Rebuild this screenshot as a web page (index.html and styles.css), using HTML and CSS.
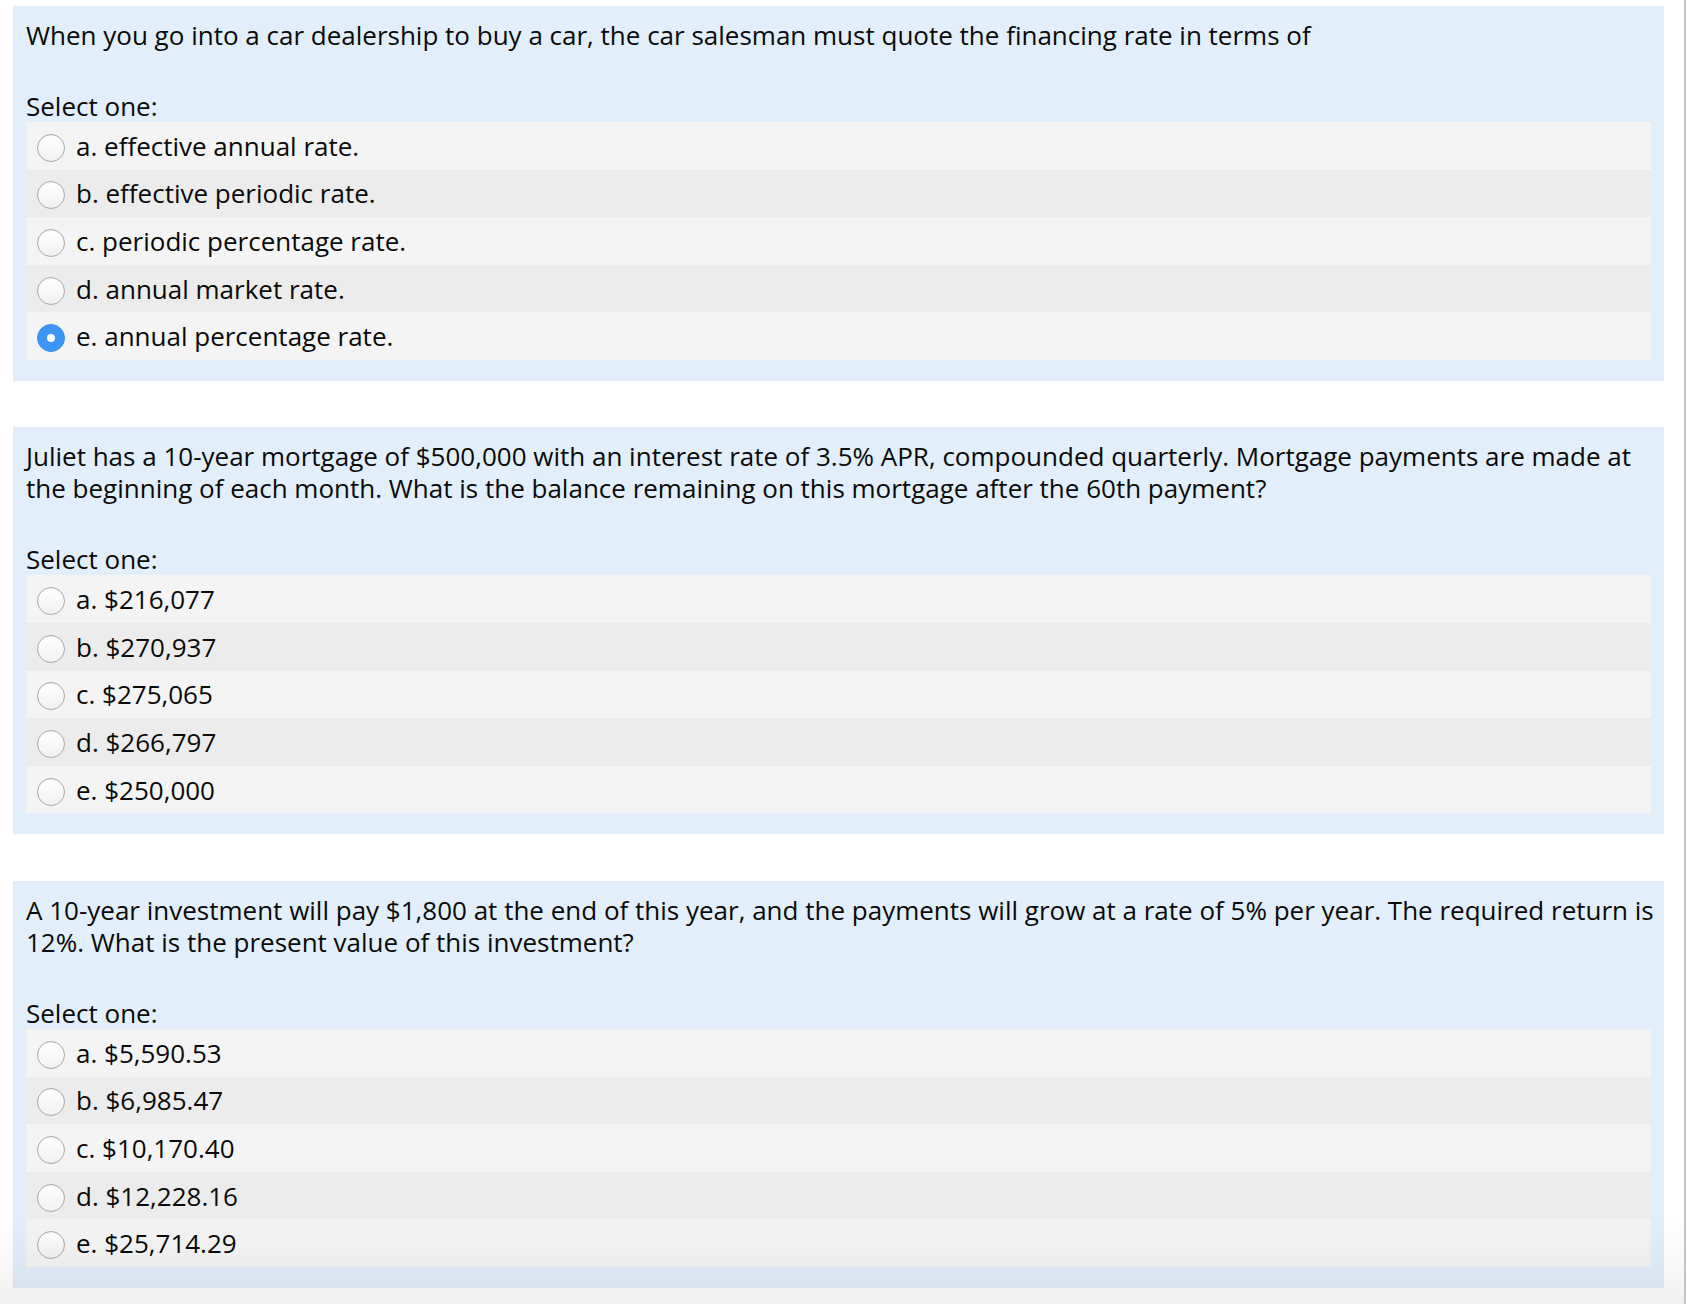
FILE: index.html
```html
<!DOCTYPE html>
<html>
<head>
<meta charset="utf-8">
<link rel="stylesheet" href="styles.css">
</head>
<body>
<div class="page">
  <div class="que">
    <div class="qtext">When you go into a car dealership to buy a car, the car salesman must quote the financing rate in terms of</div>
    <div class="prompt">Select one:</div>
    <div class="answer">
      <div class="opt"><span class="radio"></span><span class="lbl">a. effective annual rate.</span></div>
      <div class="opt"><span class="radio"></span><span class="lbl">b. effective periodic rate.</span></div>
      <div class="opt"><span class="radio"></span><span class="lbl">c. periodic percentage rate.</span></div>
      <div class="opt"><span class="radio"></span><span class="lbl">d. annual market rate.</span></div>
      <div class="opt"><span class="radio checked"></span><span class="lbl">e. annual percentage rate.</span></div>
    </div>
  </div>
  <div class="que">
    <div class="qtext">Juliet has a 10-year mortgage of $500,000 with an interest rate of 3.5% APR, compounded quarterly. Mortgage payments are made at<br>the beginning of each month. What is the balance remaining on this mortgage after the 60th payment?</div>
    <div class="prompt">Select one:</div>
    <div class="answer">
      <div class="opt"><span class="radio"></span><span class="lbl">a. $216,077</span></div>
      <div class="opt"><span class="radio"></span><span class="lbl">b. $270,937</span></div>
      <div class="opt"><span class="radio"></span><span class="lbl">c. $275,065</span></div>
      <div class="opt"><span class="radio"></span><span class="lbl">d. $266,797</span></div>
      <div class="opt"><span class="radio"></span><span class="lbl">e. $250,000</span></div>
    </div>
  </div>
  <div class="que">
    <div class="qtext">A 10-year investment will pay $1,800 at the end of this year, and the payments will grow at a rate of 5% per year. The required return is<br>12%. What is the present value of this investment?</div>
    <div class="prompt">Select one:</div>
    <div class="answer">
      <div class="opt"><span class="radio"></span><span class="lbl">a. $5,590.53</span></div>
      <div class="opt"><span class="radio"></span><span class="lbl">b. $6,985.47</span></div>
      <div class="opt"><span class="radio"></span><span class="lbl">c. $10,170.40</span></div>
      <div class="opt"><span class="radio"></span><span class="lbl">d. $12,228.16</span></div>
      <div class="opt"><span class="radio"></span><span class="lbl">e. $25,714.29</span></div>
    </div>
  </div>
</div>
<div class="edge"></div>
<div class="shade"></div>
</body>
</html>
```

FILE: styles.css
```css
html, body {
  margin: 0;
  padding: 0;
  background: #ffffff;
}
body {
  font-family: "Open Sans", "DejaVu Sans", sans-serif;
  font-size: 26px;
  line-height: 32px;
  color: #0a0a0a;
  overflow: hidden;
  height: 1304px;
}
.page {
  padding: 6px 0 0 13px;
  width: 1651px;
  display: flex;
  flex-direction: column;
  gap: 46.5px;
}
.que {
  background: #e2eef9;
  padding: 13px 13px 21px 13px;
}
.qtext {
  white-space: nowrap;
  margin-bottom: 39px;
}
.answer {
  display: flex;
  flex-direction: column;
}
.opt {
  height: 47.6px;
  display: flex;
  align-items: center;
  padding-left: 11px;
  background: #f4f4f4;
}
.opt:nth-child(even) {
  background: #ececec;
}
.radio {
  width: 26px;
  height: 26px;
  border-radius: 50%;
  border: 1px solid #a9a9a9;
  background: linear-gradient(#ffffff, #f1f1f1);
  box-shadow: inset 0 1px 1px rgba(0,0,0,0.04);
  margin-top: 4px;
  margin-right: 11px;
  flex: none;
  position: relative;
}
.radio.checked {
  border-color: #3a90ee;
  background: #3d95f5;
  box-shadow: none;
}
.radio.checked::after {
  content: "";
  position: absolute;
  left: 9px;
  top: 9px;
  width: 8px;
  height: 8px;
  border-radius: 50%;
  background: #ffffff;
}
.edge {
  position: fixed;
  top: 0;
  left: 1684px;
  width: 2px;
  height: 1304px;
  background: #c4c4c4;
}
.shade {
  position: fixed;
  left: 0;
  bottom: 0;
  width: 1684px;
  height: 90px;
  background: linear-gradient(to bottom, rgba(0,0,0,0) 0%, rgba(0,0,0,0.025) 50%, rgba(0,0,0,0.06) 100%);
  pointer-events: none;
}
```
